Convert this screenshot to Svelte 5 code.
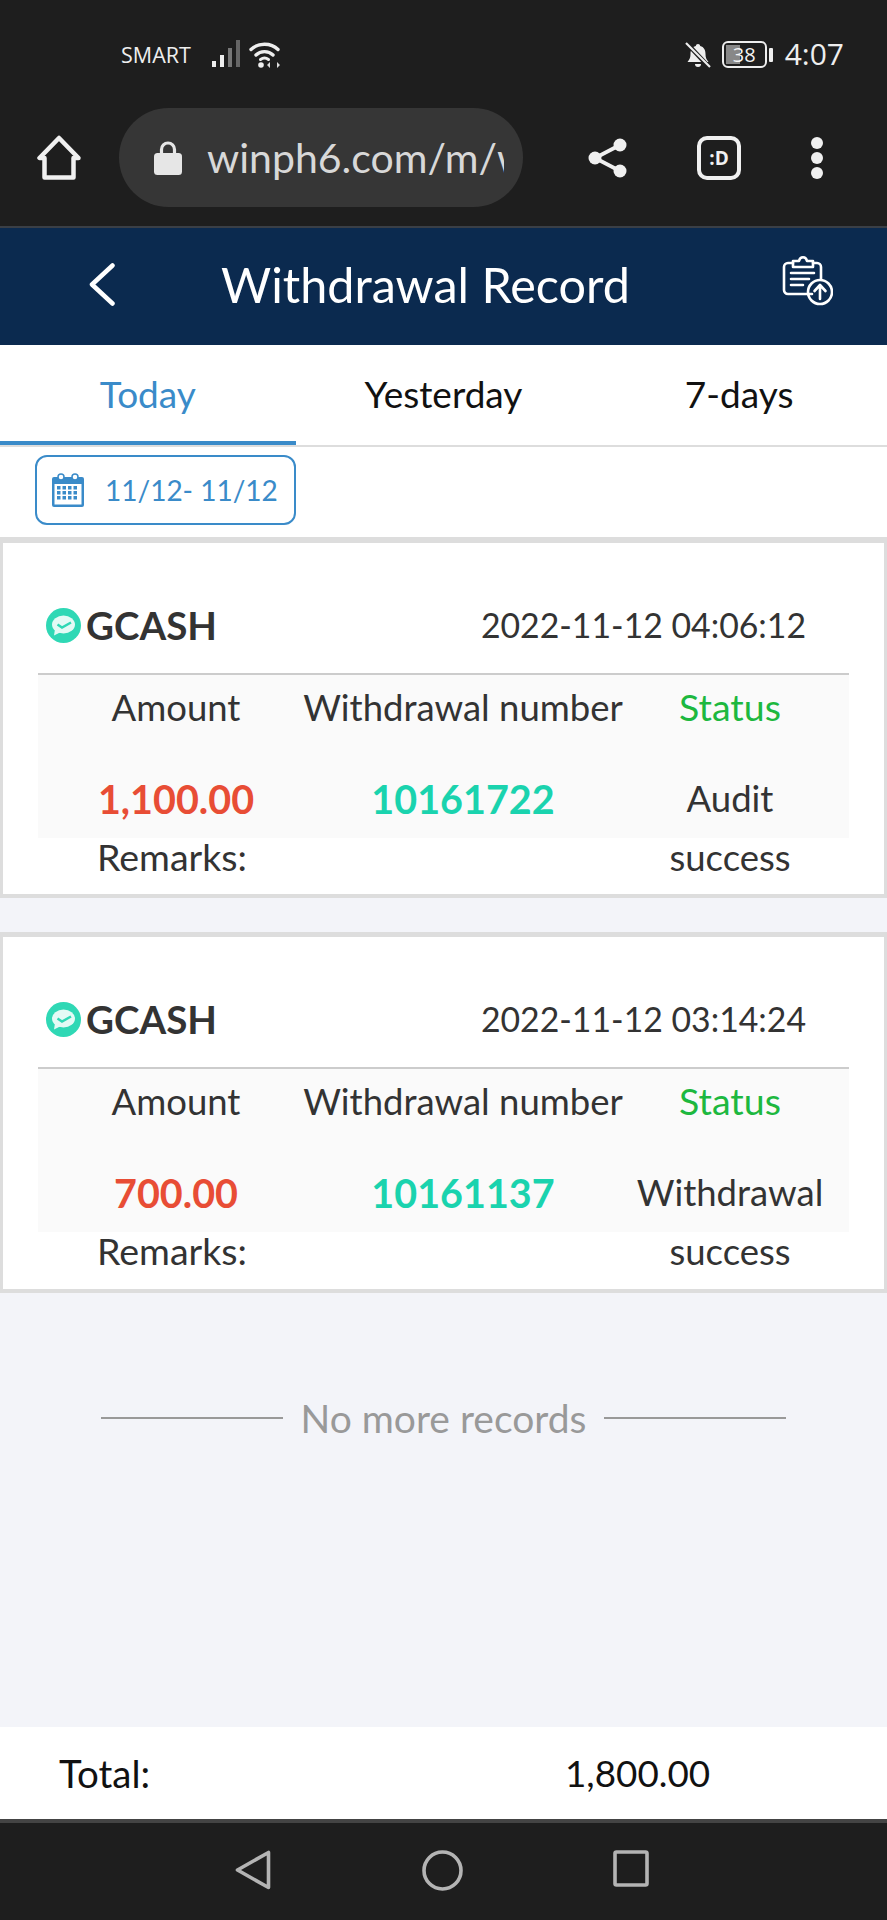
<script>
  const records = [
    { amount: '1,100.00', number: '10161722', time: '2022-11-12 04:06:12', s1: 'Audit', s2: 'success' },
    { amount: '700.00', number: '10161137', time: '2022-11-12 03:14:24', s1: 'Withdrawal', s2: 'success' }
  ];
</script>

<div class="page">
  <div class="chrome">
    <div class="status">
      <span class="carrier">SMART</span>
      <svg class="signal" viewBox="0 0 28 27" width="28" height="27">
        <rect x="0" y="21" width="4" height="6" fill="#eee"/>
        <rect x="8" y="15" width="4" height="12" fill="#eee"/>
        <rect x="16" y="8" width="4" height="19" fill="#777"/>
        <rect x="24" y="0" width="4" height="27" fill="#666"/>
      </svg>
      <svg class="wifi" viewBox="0 0 35 27" width="35" height="27" fill="none" stroke="#eee" stroke-width="3.4" stroke-linecap="round">
        <path d="M3 8.500C10 1.500 23 1.500 30 8.500"/>
        <path d="M8 14C12.500 9.500 20.500 9.500 25 14"/>
        <path d="M12.500 18.500C15 16.700 18 16.700 20.500 18.500" stroke-width="3"/>
        <circle cx="13" cy="24" r="2.800" fill="#eee" stroke="none"/>
        <path d="M22 21l-3 3 3 3zM29 21l3 3-3 3z" fill="#ddd" stroke="none"/>
      </svg>
      <span class="grow"></span>
      <svg class="bell" viewBox="0 0 26 26" width="26" height="26">
        <path d="M13 2c-1.300 0-2 .8-2.200 2C7 5 5.500 8 5.500 12c0 3-.7 5.500-3 8h21c-2.300-2.500-3-5-3-8 0-4-1.500-7-5.300-8-.2-1.200-.9-2-2.200-2z" fill="#eee"/>
        <path d="M10 22h6a3 3 0 0 1-6 0z" fill="#eee"/>
        <path d="M2 1.500L24 25" stroke="#1e1e1e" stroke-width="4.500"/>
        <path d="M1 1L25 25" stroke="#eee" stroke-width="2.200"/>
      </svg>
      <div class="battery">
        <div class="cell"><span class="fill"></span><span class="pct">38</span></div>
        <span class="nub"></span>
      </div>
      <span class="clock">4:07</span>
    </div>

    <div class="toolbar">
      <svg class="home" viewBox="0 0 44 45" width="44" height="45" fill="none" stroke="#f0f0f0" stroke-width="4.500" stroke-linejoin="round" stroke-linecap="round">
        <path d="M22 3L2.500 23H7.500V42.500H36.500V23H41.500Z"/>
      </svg>
      <div class="url">
        <svg viewBox="0 0 28 35" width="28" height="35">
          <path d="M7.500 14V9.500a6.500 6.500 0 0 1 13 0V14" fill="none" stroke="#e6e6e6" stroke-width="3.200"/>
          <rect x="0" y="13" width="28" height="22" rx="3.500" fill="#e6e6e6"/>
        </svg>
        <span class="urltext">winph6.com/m/w</span>
      </div>
      <svg class="share" viewBox="0 0 39 40" width="39" height="40" fill="none" stroke="#f0f0f0" stroke-width="3.800">
        <path d="M32 7L7 20L32 33"/>
        <circle cx="32" cy="7" r="6.500" fill="#f0f0f0" stroke="none"/>
        <circle cx="7" cy="20" r="6.500" fill="#f0f0f0" stroke="none"/>
        <circle cx="32" cy="33" r="6.500" fill="#f0f0f0" stroke="none"/>
      </svg>
      <div class="tabs-count">:D</div>
      <div class="dots"><i></i><i></i><i></i></div>
    </div>
  </div>

  <header class="head">
    <svg class="back" viewBox="0 0 26 43" width="26" height="43" fill="none" stroke="#fff" stroke-width="4.500" stroke-linecap="round" stroke-linejoin="round">
      <path d="M23.500 2.500L3 21.500L23.500 40.500"/>
    </svg>
    <h1>Withdrawal Record</h1>
    <svg class="clip" viewBox="0 0 51 50" width="51" height="50" fill="none" stroke="#fff" stroke-width="2.600" stroke-linecap="round" stroke-linejoin="round">
      <path d="M30 38H6a4 4 0 0 1-4-4V11a4 4 0 0 1 4-4h5"/>
      <path d="M31 7h4a4 4 0 0 1 4 4v12"/>
      <path d="M11 5h6c.5-2.500 2-3.700 4-3.700s3.500 1.200 4 3.700h6v6H11z"/>
      <path d="M9 17h23M9 23h18M9 29h12"/>
      <circle cx="38" cy="36" r="12"/>
      <path d="M38 43V30M32.500 35l5.500-6 5.500 6"/>
    </svg>
  </header>

  <nav class="tabs">
    <span class="tab active">Today</span>
    <span class="tab">Yesterday</span>
    <span class="tab">7-days</span>
  </nav>

  <div class="daterow">
    <div class="datebox">
      <svg viewBox="0 0 32 34" width="32" height="34">
        <path d="M2 4h28a2 2 0 0 1 2 2v26a2 2 0 0 1-2 2H2a2 2 0 0 1-2-2V6a2 2 0 0 1 2-2z" fill="#3a8bc9"/>
        <rect x="2.500" y="11" width="27" height="20.500" fill="#fff"/>
        <circle cx="9" cy="4" r="3" fill="#fff" stroke="#3a8bc9" stroke-width="1.500"/>
        <circle cx="23" cy="4" r="3" fill="#fff" stroke="#3a8bc9" stroke-width="1.500"/>
        <g fill="#3a8bc9">
          {#each [13, 18, 23] as y}
            {#each [5, 10.500, 16, 21.500] as x}
              <rect {x} {y} width="3.500" height="3.500"/>
            {/each}
          {/each}
        </g>
      </svg>
      <span>11/12- 11/12</span>
    </div>
  </div>

  <main class="list">
    {#each records as r}
      <section class="card">
        <div class="top">
          <div class="brand">
            <svg viewBox="0 0 35 35" width="35" height="35">
              <circle cx="17.500" cy="17.500" r="17.500" fill="#2fd8b5"/>
              <ellipse cx="17.500" cy="16.500" rx="11.500" ry="9" fill="#e4faf5"/>
              <path d="M9 21l-1 6.500 7-3.500z" fill="#e4faf5"/>
              <path d="M11.500 16.500l4.500 3 9-5" fill="none" stroke="#2fd8b5" stroke-width="2.400"/>
            </svg>
            <span>GCASH</span>
          </div>
          <time>{r.time}</time>
        </div>
        <div class="table">
          <div class="row head-row">
            <span>Amount</span>
            <span class="wide">Withdrawal number</span>
            <span class="green">Status</span>
          </div>
          <div class="row value-row">
            <b class="red">{r.amount}</b>
            <b class="teal">{r.number}</b>
            <span>{r.s1}</span>
          </div>
        </div>
        <div class="row remark-row">
          <span class="remark">Remarks:</span>
          <span></span>
          <span>{r.s2}</span>
        </div>
      </section>
    {/each}

    <div class="nomore"><span class="rule"></span><span>No more records</span><span class="rule"></span></div>
  </main>

  <footer class="total">
    <span class="tlabel">Total:</span>
    <span class="tvalue">1,800.00</span>
  </footer>

  <div class="navbar">
    <svg viewBox="0 0 36 40" width="36" height="40" fill="none" stroke="#b4b4b4" stroke-width="3.600" stroke-linejoin="round">
      <path d="M33.500 2.500V37.500L2.500 20Z"/>
    </svg>
    <svg viewBox="0 0 41 41" width="41" height="41" fill="none" stroke="#b4b4b4" stroke-width="3.600">
      <circle cx="20.500" cy="20.500" r="18.500"/>
    </svg>
    <svg viewBox="0 0 36 37" width="36" height="37" fill="none" stroke="#b4b4b4" stroke-width="3.600" stroke-linejoin="round">
      <rect x="2" y="2" width="32" height="33" rx="1.500"/>
    </svg>
  </div>
</div>

<style>
  :global(body) {
    margin: 0;
    background: #f3f4f9;
  }
  .page {
    width: 887px;
    height: 1920px;
    display: flex;
    flex-direction: column;
    overflow: hidden;
    font-family: Lato, "Open Sans", sans-serif;
    color: #333;
    background: #f3f4f9;
  }
  .chrome {
    height: 226px;
    background: #1e1e1e;
    border-bottom: 2px solid #3a3f46;
    display: flex;
    flex-direction: column;
    color: #eee;
  }
  .status {
    height: 40px;
    margin-top: 41px;
    display: flex;
    align-items: flex-start;
    padding: 0 43px 0 121px;
  }
  .carrier {
    font-size: 21.5px;
    line-height: 28px;
    font-family: "Open Sans", sans-serif;
    margin-right: 21px;
  }
  .signal { margin-top: -1px; }
  .wifi { margin-left: 8px; }
  .grow { flex: 1; }
  .battery {
    display: flex;
    align-items: center;
    margin-left: 11px;
  }
  .bell { margin-top: 1px; }
  .cell {
    width: 45px;
    height: 27px;
    box-sizing: border-box;
    border: 2.500px solid #eee;
    border-radius: 6px;
    position: relative;
    overflow: hidden;
    display: flex;
    align-items: center;
    justify-content: center;
  }
  .fill {
    position: absolute;
    left: 2px;
    top: 2px;
    bottom: 2px;
    width: 14px;
    background: #888;
  }
  .pct {
    position: relative;
    font-size: 20px;
    color: #f4f4f4;
    font-family: "Open Sans", sans-serif;
  }
  .nub {
    width: 4px;
    height: 14px;
    margin-left: 2px;
    background: #eee;
    border-radius: 1px;
  }
  .clock {
    font-size: 30px;
    line-height: 30px;
    margin-left: 12px;
    font-family: "Open Sans", sans-serif;
    margin-top: -2px;
  }
  .toolbar {
    height: 99px;
    margin-top: 27px;
    display: flex;
    align-items: center;
  }
  .home { margin-left: 37px; }
  .url {
    width: 404px;
    height: 99px;
    margin-left: 38px;
    box-sizing: border-box;
    padding-left: 35px;
    border-radius: 50px;
    background: #363636;
    display: flex;
    align-items: center;
    gap: 25px;
    overflow: hidden;
  }
  .url svg { flex: none; }
  .urltext {
    width: 297px;
    overflow: hidden;
    white-space: nowrap;
    font-size: 41px;
    color: #d8d8d8;
    line-height: 50px;
  }
  .share { margin-left: 65px; }
  .tabs-count {
    margin-left: 70px;
    width: 44px;
    height: 44px;
    box-sizing: border-box;
    border: 4.500px solid #f0f0f0;
    border-radius: 10px;
    display: flex;
    align-items: center;
    justify-content: center;
    font-size: 19px;
    font-weight: 700;
    color: #f0f0f0;
    font-family: "Open Sans", sans-serif;
  }
  .dots {
    margin-left: 70px;
    display: flex;
    flex-direction: column;
    gap: 3px;
  }
  .dots i {
    display: block;
    width: 12px;
    height: 12px;
    border-radius: 50%;
    background: #f0f0f0;
  }
  .head {
    height: 117px;
    background: #0b2a4f;
    display: flex;
    align-items: center;
    justify-content: center;
    position: relative;
  }
  .head h1 {
    margin: -5px 36px 0 0;
    font-size: 48.5px;
    font-weight: 400;
    color: #fff;
  }
  .back {
    position: absolute;
    left: 89px;
    top: 35px;
  }
  .clip {
    position: absolute;
    left: 782px;
    top: 28px;
  }
  .tabs {
    height: 102px;
    box-sizing: border-box;
    background: #fff;
    border-bottom: 2px solid #ddd;
    display: grid;
    grid-template-columns: repeat(3, 1fr);
  }
  .tab {
    text-align: center;
    font-size: 37px;
    line-height: 98px;
    color: #111;
    height: 100px;
    box-sizing: border-box;
  }
  .tab.active {
    color: #3a8bc9;
    border-bottom: 4px solid #3a8bc9;
  }
  .daterow {
    height: 90px;
    box-sizing: border-box;
    padding: 8px 0 0 35px;
    background: #fff;
  }
  .datebox {
    width: 261px;
    height: 70px;
    box-sizing: border-box;
    border: 2.500px solid #3a8bc9;
    border-radius: 12px;
    display: flex;
    align-items: center;
    padding-left: 15px;
    gap: 21px;
    color: #3a8bc9;
    font-size: 28px;
    white-space: nowrap;
  }
  .list {
    flex: 1;
    display: flex;
    flex-direction: column;
  }
  .card {
    height: 361px;
    box-sizing: border-box;
    background: #fff;
    border: solid #ddd;
    border-width: 6px 3px 4px;
    margin-bottom: 34px;
    padding: 0 35px;
  }
  .card + .card { border-top-width: 5px; }
  .top {
    height: 132px;
    box-sizing: border-box;
    border-bottom: 2px solid #ccc;
    display: flex;
    align-items: center;
    justify-content: space-between;
    padding: 34px 43px 0 8px;
  }
  .brand {
    display: flex;
    align-items: center;
    gap: 5px;
    font-size: 38.5px;
    font-weight: 700;
    color: #333;
  }
  time {
    font-size: 33.8px;
    color: #333;
  }
  .table { background: #fafafa; }
  .row {
    display: grid;
    grid-template-columns: 276px 298px 236px;
    text-align: center;
    font-size: 36.5px;
    align-items: center;
    white-space: nowrap;
  }
  .wide { margin: 0 -20px; }
  .head-row { height: 63px; }
  .value-row {
    height: 100px;
    box-sizing: border-box;
    padding-top: 20px;
  }
  .remark-row {
    height: 56px;
    line-height: 38px;
    align-items: start;
  }
  .remark {
    text-align: left;
    padding-left: 59px;
    font-size: 37.5px;
  }
  .green { color: #1db83f; font-size: 37.5px; }
  .red, .teal { font-size: 39.5px; font-weight: 700; }
  .red { color: #e84d35; }
  .teal { color: #1ad3ae; }
  .nomore {
    margin-top: 68px;
    display: flex;
    align-items: center;
    justify-content: center;
    gap: 18px;
    font-size: 39px;
    color: #999;
  }
  .rule {
    width: 182px;
    height: 2px;
    background: #999;
  }
  .total {
    height: 92px;
    background: #fff;
    display: flex;
    align-items: center;
    font-size: 36.8px;
    color: #111;
    flex: none;
  }
  .tlabel { margin-left: 59px; width: 506px; font-size: 38.5px; }
  .navbar {
    flex: none;
    background: #1e1e1e;
    border-top: 4px solid #444;
    box-sizing: content-box;
    height: 97px;
    display: flex;
    align-items: flex-start;
    padding: 0 238px 0 235px;
    justify-content: space-between;
  }
  .navbar svg { margin-top: 27px; }
</style>
